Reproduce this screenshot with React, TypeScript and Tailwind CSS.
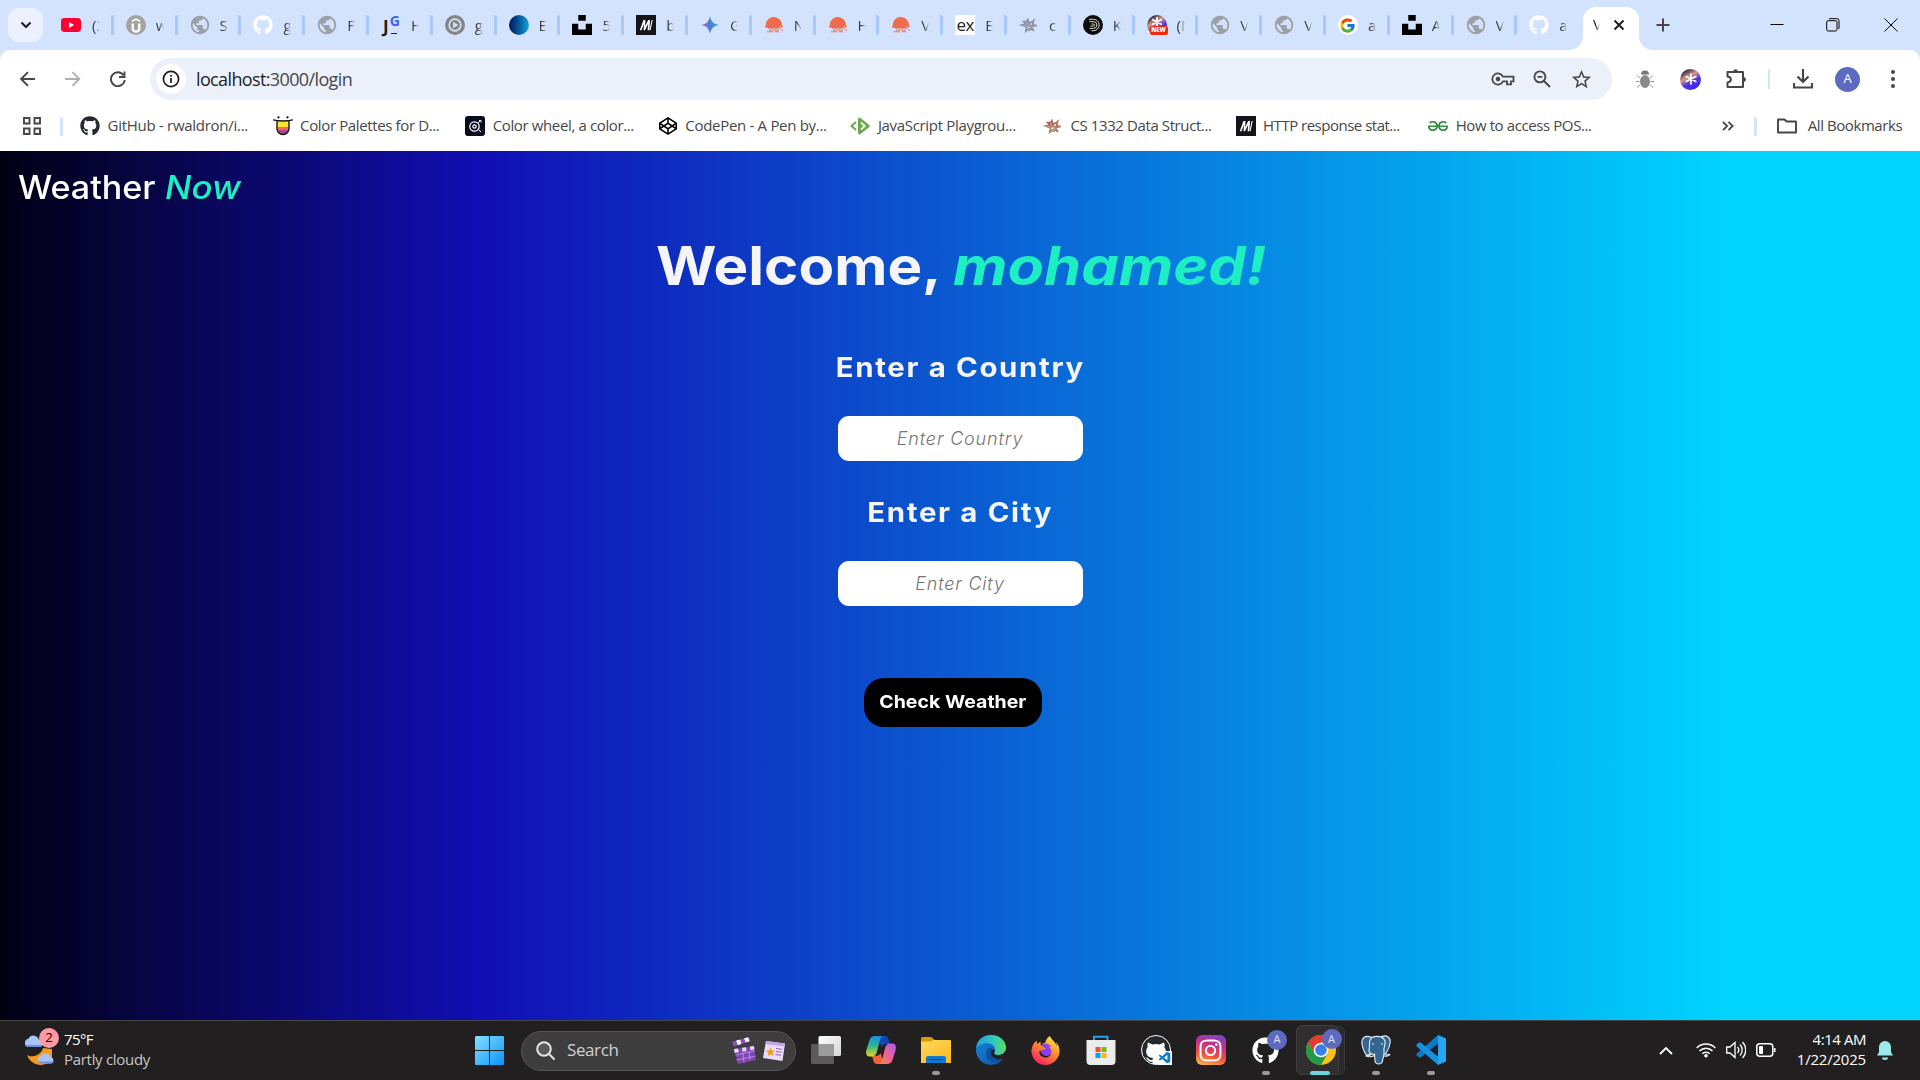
import React from "react";
import { FaGithub, FaCodepen, FaInstagram } from "react-icons/fa";
import { FcGoogle } from "react-icons/fc";
import { SiGeeksforgeeks, SiUnsplash, SiFirefoxbrowser } from "react-icons/si";
import { MdPublic, MdStarBorder } from "react-icons/md";
import { VscVscode } from "react-icons/vsc";

const Globe = () => <MdPublic className="size-[22px] shrink-0 text-[#9aa0a6]" />;
const GithubWhite = () => <FaGithub className="size-5 text-white" />;

const Youtube = () => (
  <svg viewBox="0 0 20 20" className="-ml-[3px] size-5">
    <rect y="3" width="20" height="14" rx="3.4" fill="#ff0033" />
    <path d="M8 7l5.2 3L8 13z" fill="#fff" />
  </svg>
);
const Upload = () => (
  <svg viewBox="0 0 20 20" className="size-5">
    <circle cx="10" cy="10" r="10" fill="#a3a3a3" />
    <path d="M6.700 8.400v5a3.300 3.300 0 0 0 6.600 0v-5" fill="none" stroke="#fff" strokeWidth="2.300" />
    <path d="M6 6.300l4-2.200 4 2.200" fill="none" stroke="#fff" strokeWidth="1.700" />
  </svg>
);
const JustGeek = () => (
  <span className="relative size-5 font-bold text-[#1c1c1c]">
    <span className="absolute top-[3px] left-[2px] text-[17px] leading-none">J</span>
    <span className="absolute top-[-1px] right-[1px] text-[14px] leading-none text-[#4263eb]">G</span>
    <span className="absolute right-[4px] bottom-[1px] h-px w-[6px] bg-[#1c1c1c]" />
  </span>
);
const PlayCircle = () => (
  <svg viewBox="0 0 20 20" className="size-5">
    <circle cx="10" cy="10" r="10" fill="#858585" />
    <circle cx="10" cy="10" r="5.800" fill="none" stroke="#d3e3fd" strokeWidth="1.700" />
    <path d="M8.200 6.800l5 3.200-5 3.200z" fill="#d3e3fd" />
  </svg>
);
const BlueBall = () => <span className="size-5 rounded-full bg-linear-to-r from-[#06145c] to-[#19a5d8]" />;
const Unsplash = () => <SiUnsplash className="size-5 text-black" />;
const Mdn = () => (
  <svg viewBox="0 0 20 20" className="size-5">
    <rect width="20" height="20" fill="#15141a" />
    <path d="M3.800 15.200L7.400 5h2L9.200 11 12.200 5h1.900l-.8 10.200h-1.700l.6-6.400-3.200 6.400H7.600L7.900 8.800 5.500 15.200z" fill="#fff" />
    <path d="M14 15.200L16.200 5" stroke="#fff" strokeWidth="1.100" />
  </svg>
);
const Gemini = () => (
  <svg viewBox="0 0 20 20" className="size-5">
    <defs>
      <linearGradient id="gem">
        <stop offset=".1" stopColor="#a56bb5" />
        <stop offset=".5" stopColor="#4a7fdb" />
        <stop offset="1" stopColor="#1ba5e8" />
      </linearGradient>
    </defs>
    <path d="M10 1C11 6.500 13.500 9 18.800 10 13.500 11 11 13.500 10 19 9 13.500 6.500 11 1.200 10 6.500 9 9 6.500 10 1z" fill="url(#gem)" />
  </svg>
);
const Sunset = () => (
  <svg viewBox="0 0 20 20" className="size-5" fill="#ee6c4d">
    <path d="M2 12.500a8.200 8.200 0 1 1 16-1h-3v1.200H2z" />
    <path d="M1 11h13v1.200h3v1.300H4v-1.200H1zM5 14.400h10v1H5zM3 16.200h6v1H3zM11 16.200h4v1h-4zM17 14.400h2v1h-2zM17 11h2v1h-2z" />
  </svg>
);
const Express = () => (
  <span className="flex size-5 items-center justify-center bg-white pb-[2px] text-[17px] leading-none tracking-[-0.6px] text-[#222]">ex</span>
);
const Knot = ({ warm }: { warm?: boolean }) => (
  <svg viewBox="0 0 20 20" className="size-5" fill="none" stroke={warm ? "#a8796b" : "#8d95a3"} strokeWidth="1.300">
    <path d="M9 3.500l1 5.500 5-4-2 5 5 .5-5.500 1.200 2.500 4.300-4.500-3-4 3.500.8-4.500L2 10l5-1-3.500-3L8 8z" />
    <circle cx="7.500" cy="8" r="2.200" stroke={warm ? "#b55a52" : "#8d95a3"} />
    <circle cx="12.500" cy="9" r="2.200" />
    <circle cx="10" cy="13" r="2.400" stroke={warm ? "#b39050" : "#8d95a3"} />
  </svg>
);
const GreyKnot = () => <Knot />;
const Swirl = () => (
  <svg viewBox="0 0 20 20" className="size-5">
    <circle cx="10" cy="10" r="10" fill="#0a0a0a" />
    <path d="M6 4.300h4.500a5.700 5.700 0 0 1 0 11.400H8.500M6.500 6.600h4a3.400 3.400 0 0 1 0 6.800H6.500M8.500 9h2a1 1 0 0 1 0 2.100H7.500" fill="none" stroke="#d6d6d6" strokeWidth="1" />
  </svg>
);
const Asterisk = () => (
  <span className="flex size-[21px] items-center justify-center rounded-full bg-[linear-gradient(150deg,#1d1440_10%,#d69a86_38%,#4b35e8_60%,#3a20e0)]">
    <svg viewBox="0 0 20 20" className="size-5" stroke="#fff" strokeWidth="1.700" strokeLinecap="round">
      <path d="M10 5v10M5.200 7.500l9.600 5M14.800 7.500l-9.600 5" />
    </svg>
  </span>
);
const AsteriskNew = () => (
  <span className="relative">
    <span className="flex size-5 items-start justify-center rounded-full bg-[linear-gradient(150deg,#1d1440_10%,#d69a86_38%,#4b35e8_60%,#3a20e0)]">
      <svg viewBox="0 0 20 20" className="-mt-[2px] size-[18px]" stroke="#fff" strokeWidth="1.900" strokeLinecap="round">
        <path d="M10 5v10M5.200 7.500l9.600 5M14.800 7.500l-9.600 5" />
      </svg>
    </span>
    <span className="absolute right-[-1px] bottom-0 flex h-[9px] w-[18px] items-center justify-center rounded-[2px] bg-[#ee2b0f] text-[6px] font-extrabold text-white">NEW</span>
  </span>
);
const GoogleG = () => (
  <span className="flex size-5 items-center justify-center rounded-full bg-white">
    <FcGoogle className="size-[17px]" />
  </span>
);

const tabs: [React.FC, string][] = [
  [Youtube, "(3"], [Upload, "w"], [Globe, "S"], [GithubWhite, "g"], [Globe, "F"], [JustGeek, "H"],
  [PlayCircle, "g"], [BlueBall, "E"], [Unsplash, "5"], [Mdn, "b"], [Gemini, "G"], [Sunset, "N"],
  [Sunset, "H"], [Sunset, "V"], [Express, "E"], [GreyKnot, "c"], [Swirl, "K"], [AsteriskNew, "(N"],
  [Globe, "V"], [Globe, "V"], [GoogleG, "a"], [Unsplash, "A"], [Globe, "V"], [GithubWhite, "a"],
];

function TabStrip() {
  return (
    <div className="flex h-[50px] shrink-0 bg-[#d3e3fd]">
      <div className="mt-2 ml-2 flex h-[34px] w-[35px] shrink-0 items-center justify-center rounded-[11px] bg-[#ebf2fe]">
        <svg viewBox="0 0 12 12" className="size-3" fill="none" stroke="#1f1f1f" strokeWidth="2.100"><path d="M1.500 3.500L6 8l4.500-4.500" /></svg>
      </div>
      <div className="ml-[6px] flex w-[1531px] shrink-0">
        {tabs.map(([Icon, label], i) => (
          <div key={i} className="flex h-[50px] w-[63.8px] shrink-0 items-center pl-[13px]">
            <span className="flex w-5 shrink-0 justify-center"><Icon /></span>
            <span className="ml-[10px] w-[8px] shrink-0 overflow-hidden mask-r-from-40% text-[15px] whitespace-nowrap text-[#3c4043]">{label}</span>
            {i < 23 && <span className="mr-[-1px] ml-auto h-5 w-[3px] shrink-0 rounded-full bg-[#a8c7fa]" />}
          </div>
        ))}
      </div>
      <div className="relative mt-[7px] ml-[3px] flex h-[43px] w-[56px] shrink-0 items-center rounded-t-[13px] bg-white pl-[10px]">
        <svg viewBox="0 0 14 14" className="absolute bottom-0 left-[-14px] size-[14px]"><path d="M14 0v14H0A14 14 0 0 0 14 0z" fill="#fff" /></svg>
        <svg viewBox="0 0 14 14" className="absolute right-[-14px] bottom-0 size-[14px]"><path d="M0 0v14h14A14 14 0 0 1 0 0z" fill="#fff" /></svg>
        <span className="-mt-[8px] w-[7px] shrink-0 overflow-hidden mask-r-from-40% text-[15px] text-[#1f1f1f]">V</span>
        <svg viewBox="0 0 12 12" className="-mt-[7px] ml-[13px] size-3" stroke="#1f1f1f" strokeWidth="2"><path d="M1.500 1.500l9 9M10.500 1.500l-9 9" /></svg>
      </div>
      <svg viewBox="0 0 14 14" className="mt-[18px] ml-[17px] size-[14px]" stroke="#474747" strokeWidth="2"><path d="M7 .5v13M.5 7h13" /></svg>
      <svg viewBox="0 0 14 14" className="mt-[18px] ml-[100px] size-[14px]" stroke="#000" strokeWidth="1"><path d="M.5 6.500h13" /></svg>
      <svg viewBox="0 0 14 14" className="mt-[18px] ml-[42px] size-[14px]" fill="none" stroke="#000"><rect x=".7" y="2.700" width="10.300" height="10.300" rx="1.500" /><path d="M3 .7h8a2 2 0 0 1 2 2V11" /></svg>
      <svg viewBox="0 0 14 14" className="mt-[18px] ml-[44px] size-[14px]" stroke="#000"><path d="M.5.5l13 13M13.500.5l-13 13" /></svg>
    </div>
  );
}

function Toolbar() {
  return (
    <div className="bg-[#d3e3fd]">
      <div className="flex h-[58px] items-center rounded-t-[10px] bg-white text-[#474747]">
        <svg viewBox="0 0 16 16" className="ml-[20px] size-4" fill="none" stroke="#474747" strokeWidth="1.900"><path d="M15 8H1.500M8 1.200L1.200 8 8 14.800" /></svg>
        <svg viewBox="0 0 16 16" className="ml-[29px] size-4" fill="none" stroke="#b0b0b0" strokeWidth="1.900"><path d="M0 8h14M7.500 1.200L14.300 8l-6.800 6.800" /></svg>
        <svg viewBox="0 0 16 16" className="ml-[29px] size-4" fill="none" stroke="#474747" strokeWidth="1.900"><path d="M13.500 4.200A6.900 6.900 0 1 0 14.700 9" /><path d="M14.500.5v5.500H9" /></svg>
        <div className="ml-[24px] flex h-[42px] w-[1462px] items-center rounded-full bg-[#ebf0fa]">
          <span className="ml-[6px] flex size-[30px] items-center justify-center rounded-full bg-white">
            <svg viewBox="0 0 18 18" className="size-[18px]" fill="none" stroke="#1f1f1f" strokeWidth="1.700"><circle cx="9" cy="9" r="7.600" /><path d="M9 8v5M9 5v1.800" /></svg>
          </span>
          <span className="ml-[10px] w-[160px] text-[18px] tracking-[-0.63px] whitespace-nowrap text-[#474747]"><span className="text-[#1f1f1f]">localhost:</span>3000/login</span>
          <svg viewBox="0 0 24 14" className="ml-auto h-[14px] w-[24px]" fill="none" stroke="#474747" strokeWidth="1.800"><path d="M12 4.700A5.600 5.600 0 1 0 12 9.300h4v3h4V9.300h2.500V4.700z" /><circle cx="7" cy="7" r="2.300" fill="#474747" stroke="none" /></svg>
          <svg viewBox="0 0 18 18" className="ml-[18px] size-[18px]" fill="none" stroke="#474747" strokeWidth="1.900"><circle cx="6.900" cy="6.900" r="5.500" /><path d="M11 11l6 6M4.500 6.900h4.800" /></svg>
          <MdStarBorder className="mr-[19px] ml-[19px] size-[23px]" />
        </div>
        <svg viewBox="0 0 18 20" className="ml-[24px] h-5 w-[18px]" fill="#8a8a8a"><ellipse cx="9" cy="12.500" rx="5" ry="6.500" /><path d="M5 5.500a4 4 0 0 1 8 0z" fill="#777" /><path d="M4 9L1 6.500M14 9l3-2.500M3.500 12.500H0M14.500 12.500H18M4 16l-3 2.500M14 16l3 2.500" stroke="#9a9a9a" /></svg>
        <span className="ml-[26px]"><Asterisk /></span>
        <svg viewBox="0 0 22 22" className="mb-px ml-[24px] size-[22px]" fill="none" stroke="#474747" strokeWidth="2" strokeLinejoin="round"><path d="M2.500 4h15.500v15H2.500v-4.500c4.500-.5 4.500-5.500 0-6z" /><path d="M8.200 3.500a2 2 0 0 1 4.600 0zM18.500 9a2.200 2.200 0 0 1 0 5z" fill="#474747" stroke="none" /></svg>
        <span className="ml-[21px] h-5 w-[2px] bg-[#d3e3fd]" />
        <svg viewBox="0 0 20 20" className="ml-[23px] size-5" fill="none" stroke="#474747" strokeWidth="2.200"><path d="M10 0v12.500M4.500 7.500l5.500 5.500 5.500-5.500M1 14v4.500h18V14" /></svg>
        <span className="ml-[22px] flex size-[25px] items-center justify-center rounded-full bg-[#5c6bc0] text-[13px] text-white">A</span>
        <svg viewBox="0 0 6 20" className="ml-[30px] h-5 w-[6px]" fill="#474747"><circle cx="3" cy="3" r="2" /><circle cx="3" cy="10" r="2" /><circle cx="3" cy="17" r="2" /></svg>
      </div>
    </div>
  );
}

const Mug = () => (
  <svg viewBox="0 0 20 20" className="size-5">
    <path d="M4.500 5h11v7.500a5.500 5.500 0 0 1-11 0z" fill="#ffe62e" />
    <path d="M4.500 11h11v2.500h-11z" fill="#f46a5c" />
    <path d="M5 13.500h10.500a5 5 0 0 1-10.500 0z" fill="#a8478f" />
    <path d="M0 3.800c5 1.500 15 1.500 20 0M4 5v7.500a6 6 0 0 0 12 0V5" fill="none" stroke="#111" strokeWidth="1.400" />
    <circle cx="5.500" cy="1.300" r="1.100" /><circle cx="14.500" cy="1.300" r="1.100" />
  </svg>
);
const Wheel = () => (
  <svg viewBox="0 0 20 20" className="size-5" fill="none" stroke="#fff" strokeWidth="1.200">
    <rect width="20" height="20" rx="3" fill="#070b1c" stroke="none" />
    <circle cx="9.500" cy="10.500" r="4.700" /><circle cx="9.500" cy="10.500" r="1.700" /><path d="M13 7l3-3M13.500 13.500l2.500 2.500M14 4.500h2v2" strokeWidth="1" />
  </svg>
);
const JsPlay = () => (
  <svg viewBox="0 0 20 20" className="size-5">
    <path d="M6 6L1.500 10 6 14" fill="none" stroke="#6da850" strokeWidth="2" />
    <path d="M8 3.500Q8 0 10.800 2.300L19 8.800q1.500 1.200 0 2.400L10.800 17.700Q8 20 8 16.500z" fill="#6da850" />
    <path d="M11 6.500l3.800 3.500L11 13.500" fill="none" stroke="#fff" strokeWidth="1.700" />
  </svg>
);

const bookmarks: [React.ReactNode, string, string][] = [
  [<FaGithub className="size-5 text-[#24292f]" />, "GitHub - rwaldron/i...", "tracking-[-0.28px]"],
  [<Mug />, "Color Palettes for D...", "tracking-[-0.37px]"],
  [<Wheel />, "Color wheel, a color...", "tracking-[-0.37px]"],
  [<FaCodepen className="size-[18px] text-black" />, "CodePen - A Pen by...", "tracking-[-0.3px]"],
  [<JsPlay />, "JavaScript Playgrou...", "tracking-[-0.32px]"],
  [<Knot warm />, "CS 1332 Data Struct...", "tracking-[-0.4px]"],
  [<Mdn />, "HTTP response stat...", "tracking-[-0.5px]"],
  [<SiGeeksforgeeks className="size-5 text-[#2f8d46]" />, "How to access POS...", "tracking-[-0.4px]"],
];

function BookmarksBar() {
  return (
    <div className="flex h-[43px] items-center bg-white pb-[7px] text-[15px] text-[#474747]">
      <svg viewBox="0 0 18 18" className="ml-[23px] size-[18px]" fill="none" stroke="#474747" strokeWidth="1.900"><path d="M1 1h5.500v5.500H1zM11.500 1H17v5.500h-5.500zM1 11.500h5.500V17H1zM11.500 11.500H17V17h-5.500z" /></svg>
      <span className="ml-[19px] h-[19px] w-[3px] rounded-full bg-[#d3e3fd]" />
      <div className="ml-[17px] flex">
        {bookmarks.map(([icon, text, tracking], i) => (
          <div key={i} className="flex w-[192.6px] items-center">
            <span className="flex w-5 justify-center">{icon}</span>
            <span className={"mb-[2px] ml-[7.5px] whitespace-nowrap " + tracking}>{text}</span>
          </div>
        ))}
      </div>
      <svg viewBox="0 0 12 10" className="ml-[101px] h-[10px] w-[12px]" fill="none" stroke="#474747" strokeWidth="1.800"><path d="M1 .8L5.200 5 1 9.200M6.500.8L10.700 5 6.500 9.200" /></svg>
      <span className="ml-[20px] h-[19px] w-[3px] rounded-full bg-[#d3e3fd]" />
      <svg viewBox="0 0 20 16" className="ml-[20px] h-4 w-5" fill="none" stroke="#474747" strokeWidth="1.900" strokeLinejoin="round"><path d="M1 1.500h6.500l2 2H19v11H1z" /></svg>
      <span className="mb-[2px] ml-[11px] tracking-[-0.43px] whitespace-nowrap">All Bookmarks</span>
    </div>
  );
}

function WeatherPage() {
  return (
    <main className="flex h-[869px] flex-col items-center bg-[linear-gradient(90deg,#020013_0%,#110eb4_25%,#00d4ff_90%)] font-['Inter',sans-serif]">
      <header className="flex h-[72px] w-full items-center pt-px pl-[18px] text-[32px] font-medium whitespace-nowrap text-white">
        <span className="w-[147px]"><span className="inline-block origin-left scale-x-[1.065]">Weather</span></span>
        <span className="inline-block origin-left scale-x-[1.09] text-[#1eefc3] italic">Now</span>
      </header>
      <h1 className="mt-[11px] flex h-[66px] w-[609px] items-center text-[53px] font-bold whitespace-nowrap text-[#f5f5f7]">
        <span className="w-[297px]"><span className="inline-block origin-left scale-x-[1.1]">Welcome,</span></span>
        <span className="inline-block origin-left scale-x-[1.125] text-[#1eefc3] italic">mohamed!</span>
      </h1>
      <h2 className="mt-[51px] flex h-[34px] items-center text-[27px] font-bold tracking-[1.5px] whitespace-nowrap text-[#f5f5f7]"><span className="scale-x-[1.09]">Enter a Country</span></h2>
      <input placeholder="Enter Country" className="mt-[31px] h-[45px] w-[245px] rounded-[11px] bg-white pb-px text-center text-[18px] tracking-[0.85px] italic placeholder:font-light placeholder:text-[#757575]" />
      <h2 className="mt-[35px] flex h-[34px] items-center text-[27px] font-bold tracking-[1.5px] whitespace-nowrap text-[#f5f5f7]"><span className="scale-x-[1.09]">Enter a City</span></h2>
      <input placeholder="Enter City" className="mt-[31px] h-[45px] w-[245px] rounded-[11px] bg-white pb-px text-center text-[18px] tracking-[0.8px] italic placeholder:font-light placeholder:text-[#757575]" />
      <button className="mt-[72px] mr-[14px] flex h-[49px] w-[178px] items-center justify-center rounded-[20px] bg-black pb-[2px] text-[18px] font-bold whitespace-nowrap text-white"><span className="scale-x-[1.085]">Check Weather</span></button>
    </main>
  );
}

const Cloud = ({ className }: { className: string }) => (
  <svg viewBox="0 0 18 12" className={className}><path d="M4 11.500a3.800 3.800 0 0 1 0-7.500 5 5 0 0 1 9.300.7A3.500 3.500 0 0 1 14 11.500z" fill="#a9c5f7" /><path d="M1 9.500h16a3.500 3.500 0 0 1-3 2H4a3.800 3.800 0 0 1-3-2z" fill="#6b93dc" /></svg>
);
const AccountBadge = ({ className }: { className: string }) => (
  <span className={"absolute flex size-5 items-center justify-center rounded-full bg-[#5c6bc0] text-[11px] text-[#dfe3f7] " + className}>A</span>
);

const TaskView = () => (
  <svg viewBox="0 0 30 28" className="h-7 w-[30px]">
    <defs><linearGradient id="tv" x2="1" y2="1"><stop stopColor="#fff" /><stop offset="1" stopColor="#d5d5d5" /></linearGradient></defs>
    <rect x="7.500" width="22.500" height="20" rx="1.500" fill="url(#tv)" />
    <rect y="8" width="23" height="20" rx="1.500" fill="#5a5a5a" />
    <path d="M7.500 8H23v12H7.500z" fill="#9c9c9c" />
  </svg>
);
const Copilot = () => (
  <svg viewBox="0 0 30 28" className="h-7 w-[30px]">
    <defs>
      <linearGradient id="cp1" x2="0" y2="1"><stop stopColor="#1490e8" /><stop offset=".5" stopColor="#35b58a" /><stop offset="1" stopColor="#ecd21e" /></linearGradient>
      <linearGradient id="cp2" x1="1" x2="0" y2="1"><stop stopColor="#a35cf0" /><stop offset=".5" stopColor="#ed5f9c" /><stop offset="1" stopColor="#ff8a3a" /></linearGradient>
    </defs>
    <path d="M12 0h7c2 0 3 1 3.500 3l1.300 5h-3c-3 0-4.500 1-5.500 3z" fill="#1645b8" />
    <path d="M18 28h-7c-2 0-3-1-3.500-3L6.200 20h3c3 0 4.500-1 5.500-3z" fill="#f2603c" />
    <path d="M9 0h8.500c-2 0-2.800 2-3.500 4l-3 11.500C10 19 9 20.500 5.500 20.500H3.500C0 20.500-.5 17 .5 13.500L3.500 4C4.500 1.500 6 0 9 0z" fill="url(#cp1)" />
    <path d="M21 28h-8.500c2 0 2.800-2 3.500-4l3-11.500c1-3.500 2-5 5.500-5h2c3.500 0 4 3.500 3 7L26.500 24c-1 2.500-2.500 4-5.500 4z" fill="url(#cp2)" />
  </svg>
);
const Explorer = () => (
  <svg viewBox="0 0 30 28" className="h-7 w-[30px]">
    <defs><linearGradient id="fl" x2="1" y2="1"><stop stopColor="#ffd95c" /><stop offset="1" stopColor="#f9b81c" /></linearGradient></defs>
    <path d="M0 2.500Q0 1 1.500 1h8q1 0 2 1l2 2v5H0z" fill="#d99a05" />
    <path d="M0 5.500h10L12.500 4H29q1 0 1 1v22H0z" fill="url(#fl)" />
    <path d="M5 27v-5q0-2 2-2h16q2 0 2 2v5z" fill="#1379cf" />
    <path d="M8.500 23.500h13" stroke="#0b4f93" strokeWidth="1.200" />
  </svg>
);
const Edge = () => (
  <svg viewBox="0 0 30 30" className="size-[30px]">
    <defs>
      <linearGradient id="e1"><stop stopColor="#1f9fe0" /><stop offset=".6" stopColor="#32c9c0" /><stop offset="1" stopColor="#5fdc5a" /></linearGradient>
      <linearGradient id="e2" x2="1" y2="1"><stop stopColor="#1a86d8" /><stop offset="1" stopColor="#0c54a8" /></linearGradient>
    </defs>
    <circle cx="15" cy="15" r="15" fill="url(#e2)" />
    <path d="M0 13C1 5 7 0 15 0c9 0 15 6 15 12.500 0 5-3.500 7.500-7.500 7.500-4 0-5-1.500-4-3.200C21 11 14 7.500 9 8.200 4 9 1 11.500 0 13z" fill="url(#e1)" />
    <path d="M10 17c-1 7 5 11 11 10 3-.5 6-3 7-5-4 2.500-10 1.500-12-2-1.500-2.500 0-5 1.500-6-3-2-7-.5-7.500 3z" fill="#0e4fa0" />
    <path d="M18.500 16.800c-1 1.700 0 3.200 4 3.200 3 0 6-1.500 7-4.500L31 19l-3 4c-4 2.500-10 1-12.500-2.500-1.500-3 0-5.500 2.500-6.500 1 1 1 2 .5 2.800z" fill="#211f1f" />
  </svg>
);
const Firefox = () => (
  <>
    <svg className="absolute size-0"><defs><linearGradient id="ff" x1=".8" x2=".2" y2="1"><stop stopColor="#fff14a" /><stop offset=".45" stopColor="#ff8a2a" /><stop offset="1" stopColor="#f5156c" /></linearGradient></defs></svg>
    <span className="relative flex">
      <span className="absolute top-[7px] left-[9px] size-[13px] rounded-full bg-[#8a3ff0]" />
      <SiFirefoxbrowser className="relative size-[29px]" fill="url(#ff)" />
    </span>
  </>
);
const Store = () => (
  <svg viewBox="0 0 30 30" className="size-[30px]">
    <path d="M8 7V1.700h13.500V7" fill="none" stroke="#1fa5e8" strokeWidth="2" />
    <path d="M.5 5h29v21a4 4 0 0 1-4 4h-21a4 4 0 0 1-4-4z" fill="#ececec" />
    <path d="M9.500 12h5v5h-5z" fill="#f25022" /><path d="M15.500 12h5v5h-5z" fill="#7fba00" />
    <path d="M9.500 18h5v5h-5z" fill="#00a4ef" /><path d="M15.500 18h5v5h-5z" fill="#ffb900" />
  </svg>
);
const Codespaces = () => (
  <span className="relative flex size-[30px] items-center justify-center overflow-visible rounded-full border-[1.5px] border-white bg-[#24292f]">
    <svg viewBox="0 0 30 30" className="size-[30px] shrink-0" fill="#fff">
      <path d="M7 7.500l4.500 2a14 14 0 0 1 7 0l4.500-2c.8 1.700.8 3.400.3 4.700 1.200 1.500 1.700 3 1.500 5-.4 4-3 5.600-6.800 6V29h-6.500v-2.500c-3.500.7-4.500-.8-5.500-2.500l-1.500-1.500c2-.5 3 1 4 2 1 .8 2 .7 3 .3l.5-1.800c-4-.4-6.500-2-6.800-6-.1-2 .4-3.500 1.500-5C6.300 10.700 6.300 9 7 7.500z" />
    </svg>
    <span className="absolute right-[-2px] bottom-[-1px] bg-white"><VscVscode className="size-[14px] text-[#0a7cc8]" /></span>
  </span>
);
const Instagram = () => (
  <span className="flex size-[30px] items-center justify-center rounded-[6px] bg-[linear-gradient(15deg,#fdc04c,#f0503e_35%,#c72f8e_65%,#6a4bd0)]"><FaInstagram className="size-[25px] text-white" /></span>
);
const GithubApp = () => (
  <span className="relative flex"><FaGithub className="size-[27px] text-white" /><AccountBadge className="top-[-7px] right-[-8px]" /></span>
);
const Postgres = () => (
  <svg viewBox="0 0 30 30" className="size-[30px]" stroke="#e8eef4" strokeWidth="1.100" strokeLinejoin="round" fill="#336791">
    <path d="M10 2C4 0 0 3 1 9c.6 4 3 11 6 12 2 .5 3-3 5-3V4z" />
    <path d="M20 2c6-3 10 1 9 6-.6 4-3 9-5 11l5 .5c-1.500 2-5 2-7 1z" />
    <path d="M9 5c2-5 13-5 15 1 1 4-2 6-1 11 .5 3-1 5-1.500 9-.5 4-7 4-7.500 0l-.5-7c-3 1-6-1-5.500-4C9 12 8 8 9 5z" />
    <path d="M10 18c-1 2-4 2-5 3 2 1 6 1 8-.5M11 9h2M20 9h2" fill="none" />
  </svg>
);
const Code = () => (
  <svg viewBox="0 0 30 30" className="size-[30px]">
    <path d="M22 0L30 3.500v23L22 30z" fill="#27a4f2" />
    <path d="M22 0v8.500L4 23 .5 20.500v-1.700z" fill="#0b7bc9" />
    <path d="M22 30v-8.500L4 7 .5 9.500v1.700z" fill="#1690e0" />
  </svg>
);
const Chrome = () => (
  <svg viewBox="0 0 30 30" className="size-[30px]">
    <circle cx="15" cy="15" r="15" fill="#fbc116" />
    <path d="M2 7.500A15 15 0 0 1 28 7.500H15L8.500 19z" fill="#e33b2e" />
    <path d="M2 7.500A15 15 0 0 0 15 30l6.500-11.200H8.500z" fill="#229a4a" />
    <circle cx="15" cy="15" r="7.300" fill="#fff" /><circle cx="15" cy="15" r="5.800" fill="#3b7ded" />
  </svg>
);

const apps: { Icon: React.FC; running?: boolean; active?: boolean }[] = [
  { Icon: TaskView }, { Icon: Copilot }, { Icon: Explorer, running: true }, { Icon: Edge }, { Icon: Firefox },
  { Icon: Store }, { Icon: Codespaces }, { Icon: Instagram }, { Icon: GithubApp, running: true },
  { Icon: Chrome, active: true }, { Icon: Postgres, running: true }, { Icon: Code, running: true },
];

function Taskbar() {
  return (
    <footer className="flex h-[60px] items-center border-t border-[#454545] bg-[#211f1f] text-[15px] text-white">
      <div className="relative ml-[24px] h-10 w-[36px]">
        <Cloud className="absolute top-[3px] left-0 h-[14px] w-[20px]" />
        <svg viewBox="0 0 26 18" className="absolute top-[17px] left-[3px] h-[18px] w-[26px]"><path d="M0 7c4 3 14 1 16-7l9 1v10c-5 8-20 9-25-4z" fill="#f39a1f" /></svg>
        <Cloud className="absolute top-[21px] left-[13px] h-[12px] w-[18px]" />
        <span className="absolute top-[-3px] left-[15px] flex size-5 items-center justify-center rounded-full bg-[#ff99a4] text-[13px] text-black">2</span>
      </div>
      <div className="mb-[4px] ml-[4px] w-[100px] leading-[20px] whitespace-nowrap">
        <div className="tracking-[-0.6px]">75°F</div>
        <div className="tracking-[-0.3px] text-[#c8c8c8]">Partly cloudy</div>
      </div>
      <svg viewBox="0 0 29 29" className="ml-[311px] size-[29px]"><defs><linearGradient id="win" x2="1" y2="1"><stop stopColor="#86e0ff" /><stop offset="1" stopColor="#0a93fa" /></linearGradient></defs><path d="M1 0h13v14H0V1zM15 0h13q1 0 1 1v13H15zM0 15h14v14H1q-1 0-1-1zM15 15h14v13q0 1-1 1H15z" fill="url(#win)" /></svg>
      <div className="ml-[17px] flex h-10 w-[275px] items-center rounded-full border border-[#555] bg-[#3d3d3d] text-[17px] text-[#d2d2d2]">
        <svg viewBox="0 0 19 19" className="ml-[14px] size-[19px]" fill="#595959" stroke="#e5e5e5" strokeWidth="2"><circle cx="8" cy="8" r="6.800" /><path d="M13 13l5 5" strokeLinecap="round" /></svg>
        <span className="mb-px ml-[12px] tracking-[-0.4px]">Search</span>
        <svg viewBox="0 0 24 27" className="ml-auto h-[27px] w-6"><path d="M0 5L17 0l1.500 4L2 9.500z" fill="#8d4fc0" /><path d="M4 3.800L6 8l3.500-1L8 2.600zM12 1.500l2 4 3.500-1.200L16 .3z" fill="#fff" /><path d="M2 12l20-3 2 14L6 27z" fill="#7e45ae" /><path d="M2 12l4-.6L7 15l-4.500 1zM10 10.800l4-.6.5 3.800-4 .8zM18 9.600l4-.6.3 3.500-4 .8z" fill="#e8d5fa" /><path d="M3.500 18l19-4M4.500 23l19-4M11 16.500l1 9M17 15l1 8" stroke="#c7a0e6" strokeWidth=".8" /></svg>
        <svg viewBox="0 0 22 20" className="mr-[10px] ml-[7px] h-5 w-[22px]"><path d="M3 0l19 2.500L19.500 20 0 17z" fill="#eadcf8" /><path d="M3 0l19 2.500-.5 3L2.500 3z" fill="#c6a4e8" /><path d="M13 7.500l6 .8M13 10.500l5.500.8M12.500 13.500l5.500.8" stroke="#8d62ba" /><path d="M7.500 6.500l1.200 3 3.300.3-2.500 2 .8 3.200-2.800-1.700L4.500 15l1-3.200-2.500-2 3.300-.3z" fill="#f39a12" /></svg>
      </div>
      <div className="ml-[2px] flex h-full">
        {apps.map(({ Icon, running, active }, i) => (
          <div key={i} className="relative flex w-[55px] items-center justify-center">
            {active && (
              <>
                <span className="absolute top-[5px] left-[9px] h-[49px] w-[43px] rounded-r-[6px] border border-[#383636] bg-[#2a2828]" />
                <span className="absolute top-[4px] left-[3px] h-[50px] w-[43px] rounded-[6px] border border-[#403e3e] bg-[#302e2e]" />
                <span className="absolute bottom-[5px] left-[17px] h-[4px] w-5 rounded-full bg-[#6fd3dc]" />
              </>
            )}
            <span className="relative mb-px"><Icon />{active && <AccountBadge className="top-[-6px] right-[-6px]" />}</span>
            {running && <span className="absolute bottom-[5px] left-[24px] h-[4px] w-[8px] rounded-full bg-[#9a9a9a]" />}
          </div>
        ))}
      </div>
      <svg viewBox="0 0 14 9" className="ml-auto h-[9px] w-[14px]" fill="none" stroke="#fff" strokeWidth="1.800"><path d="M1 8l6-6 6 6" /></svg>
      <svg viewBox="0 0 20 16" className="mb-[2px] ml-[23px] h-4 w-5" fill="none" stroke="#fff" strokeWidth="1.500"><path d="M.7 6a13 13 0 0 1 18.600 0M3.500 9a9 9 0 0 1 13 0M6.300 11.700a5.300 5.300 0 0 1 7.400 0" /><circle cx="10" cy="13.700" r="1.800" fill="#fff" stroke="none" /></svg>
      <svg viewBox="0 0 20 18" className="mb-px ml-[10px] h-[18px] w-5" fill="none" stroke="#fff" strokeWidth="1.300"><path d="M.7 6H4l5-4.500v15L4 12H.7zM11.500 6a4.500 4.500 0 0 1 0 6M14 3.500a8 8 0 0 1 0 11M16.500 1a11.500 11.500 0 0 1 0 16" /></svg>
      <svg viewBox="0 0 20 14" className="mb-px ml-[10px] h-[14px] w-5" fill="none" stroke="#fff" strokeWidth="1.500"><rect x=".8" y=".8" width="16" height="12.400" rx="3" /><rect x="3" y="3" width="4" height="8" rx="1" fill="#fff" stroke="none" /><path d="M18 5h1.500v4H18z" fill="#fff" stroke="none" /></svg>
      <div className="mb-[4px] ml-[16px] w-[74px] text-right leading-[20px] whitespace-nowrap">
        <div className="tracking-[-0.45px]">4:14 AM</div>
        <div className="-ml-4 tracking-[-0.2px]">1/22/2025</div>
      </div>
      <svg viewBox="0 0 16 19" className="mr-[27px] ml-[11px] h-[19px] w-4" fill="#9be9ea"><path d="M8 0a6 6 0 0 1 6 6v5l2 3.500H0L2 11V6a6 6 0 0 1 6-6zM5 16.500h6a3 2.500 0 0 1-6 0z" /></svg>
    </footer>
  );
}

export default function App() {
  return (
    <div className="flex h-[1080px] w-[1920px] flex-col overflow-hidden bg-white font-['Open_Sans',sans-serif]">
      <TabStrip />
      <Toolbar />
      <BookmarksBar />
      <WeatherPage />
      <Taskbar />
    </div>
  );
}
